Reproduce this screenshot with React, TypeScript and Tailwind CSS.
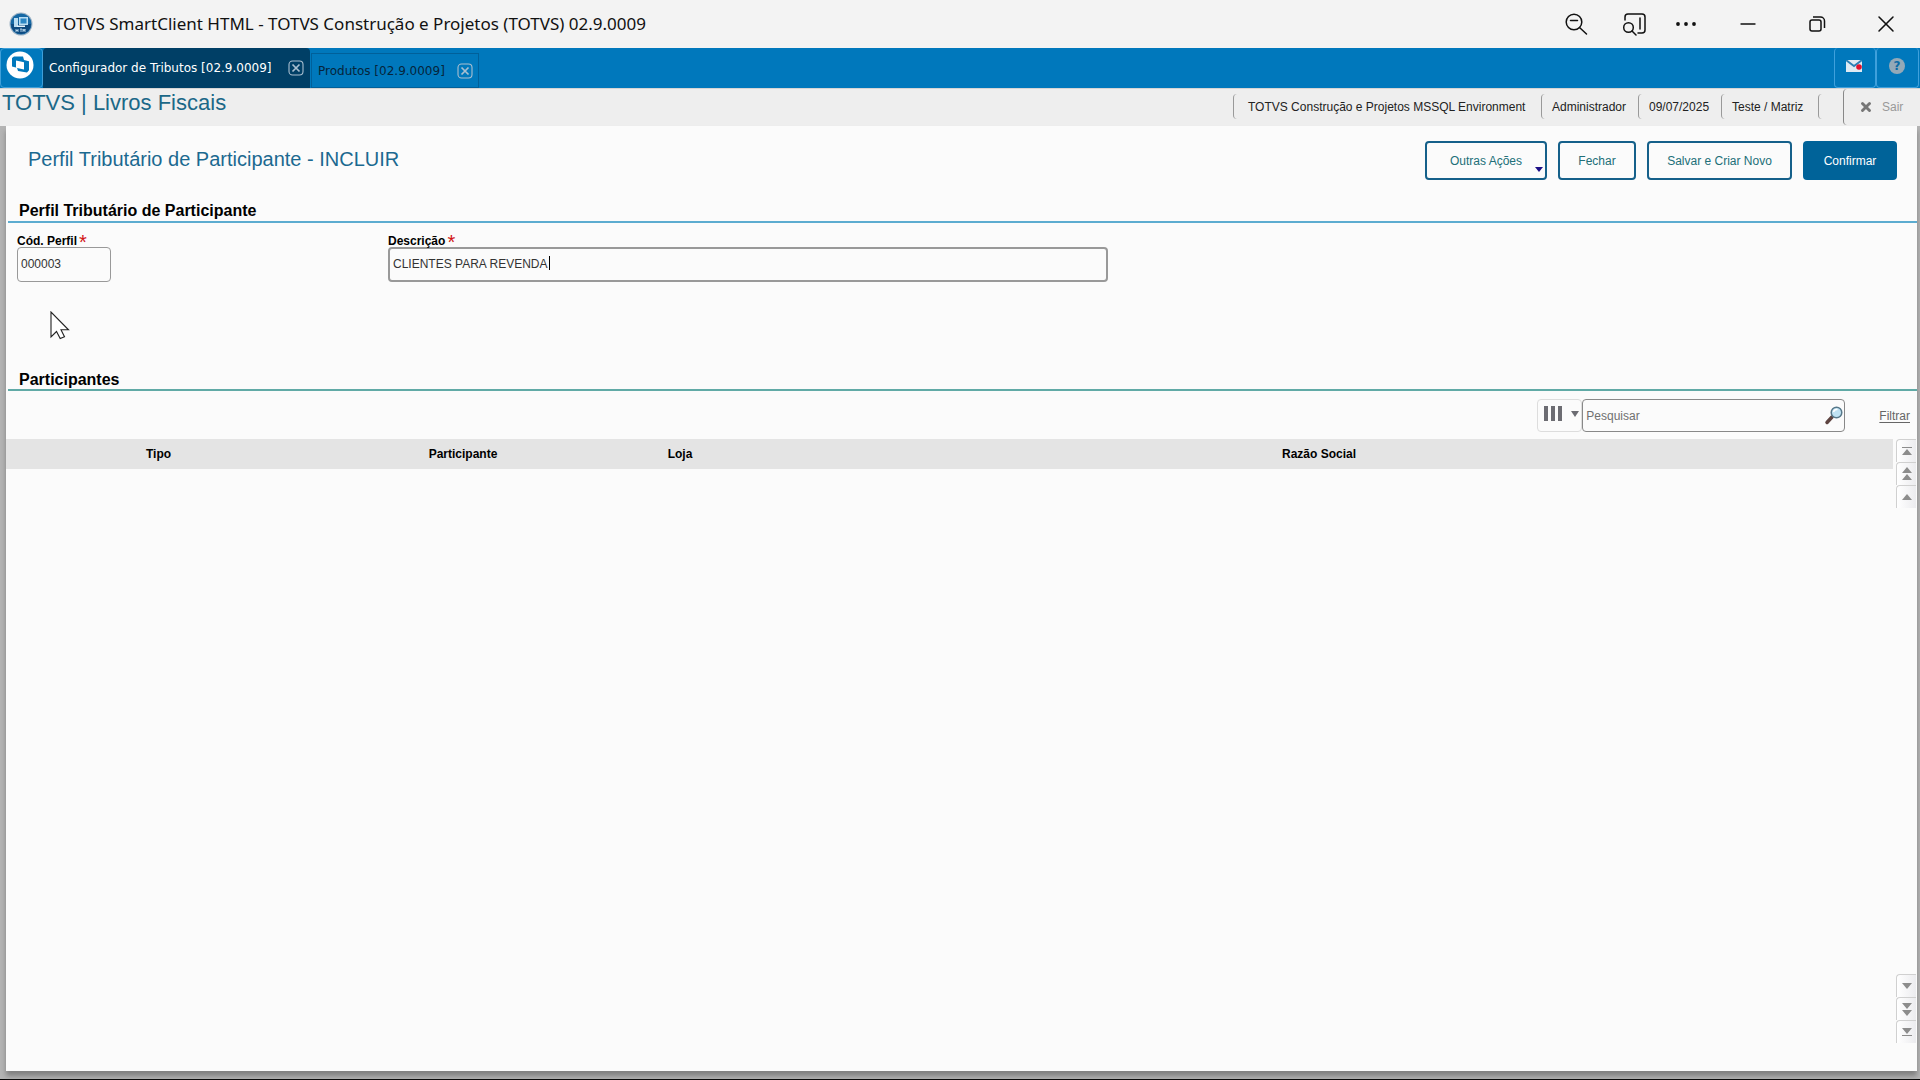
import React from 'react';
import { Minus, X } from 'lucide-react';

const ENVIRONMENT = ['TOTVS Construção e Projetos MSSQL Environment', 'Administrador', '09/07/2025', 'Teste / Matriz'];

const BUTTON = 'relative h-[39px] rounded border-2 border-[#15608a] text-[12px] text-[#216f78]';

function AppIcon() {
  return (
    <svg className="h-6 w-6" viewBox="0 0 24 24">
      <circle cx="12" cy="12" r="11.5" fill="#9fb4c6" />
      <circle cx="12" cy="12" r="10.5" fill="#1668a4" />
      <path d="M2 12a10 10 0 0 0 20 0z" fill="#0d4a80" />
      <path d="M5 6h4v9H5zM10 5h9v8h-9z" fill="#b8dcf2" />
      <path d="M11.500 6.500h6v5h-6z" fill="#2b86c4" />
      <path d="M8 13.500h8v1.500H8z" fill="#e6f4fc" />
      <path d="M7 17v3M7 18.500h2M9 17v3M11 17h2M12 17v3M14 20v-3l1 2 1-2v3" fill="none" stroke="#cfe8f7" strokeWidth="0.8" />
    </svg>
  );
}

function TotvsLogo() {
  return (
    <svg className="h-7 w-7" viewBox="0 0 28 28">
      <circle cx="14" cy="14" r="13.5" fill="#fff" />
      <path d="M6 7l2-1.500h9l1 3.500 5 1.300v9l-2 2.200-9-1.500-1-3.300-5-1.200z" fill="#0078bc" />
      <path d="M10 9.500l8 1.800v7.200l-8-1.800z" fill="#fff" />
    </svg>
  );
}

function TabClose({ label }: { label: string }) {
  return (
    <button aria-label={label} className="text-[#a9bfd0]">
      <svg className="h-4 w-4" viewBox="0 0 16 16" fill="none" stroke="currentColor">
        <rect x="1" y="1" width="14" height="14" rx="3.5" strokeWidth="1.1" />
        <path d="M4.500 4.500l7 7M11.500 4.500l-7 7" strokeWidth="1.7" />
      </svg>
    </button>
  );
}

function TitleBar() {
  return (
    <header className="flex h-12 items-center bg-[#f3f3f3] pl-[9px] text-[#111]">
      <AppIcon />
      <h1 className="ml-[21px] flex-1 font-['Noto_Sans',sans-serif] text-[17px]">
        TOTVS SmartClient HTML - TOTVS Construção e Projetos (TOTVS) 02.9.0009
      </h1>
      <div className="flex items-center">
        <button aria-label="Reduzir zoom" className="w-[58px]">
          <svg className="mx-auto h-6 w-6" viewBox="0 0 24 24" fill="none" stroke="currentColor" strokeWidth="1.5">
            <circle cx="10" cy="10" r="7.8" />
            <path d="M6.500 8.500h7M15.500 15.500l7 6.500" strokeLinecap="round" />
          </svg>
        </button>
        <button aria-label="Pesquisar na página" className="w-[58px]">
          <svg className="mx-auto h-6 w-6" viewBox="0 0 24 24" fill="none" stroke="currentColor" strokeWidth="1.5" strokeLinecap="round">
            <path d="M3 8V5a3 3 0 0 1 3-3h14a3 3 0 0 1 3 3v13a3 3 0 0 1-3 3h-4" />
            <path d="M18 6v11" />
            <circle cx="6.500" cy="15.500" r="4.800" />
            <path d="M10 19l4 4" />
          </svg>
        </button>
        <button aria-label="Mais opções" className="w-[46px]">
          <svg className="mx-auto h-6 w-6" viewBox="0 0 24 24" fill="currentColor">
            <circle cx="4" cy="12" r="1.900" />
            <circle cx="12" cy="12" r="1.900" />
            <circle cx="20" cy="12" r="1.900" />
          </svg>
        </button>
        <button aria-label="Minimizar" className="ml-1 w-[69px]">
          <Minus className="mx-auto h-6 w-6" strokeWidth={1.4} />
        </button>
        <button aria-label="Restaurar" className="w-[69px]">
          <svg className="mx-auto h-5 w-5" viewBox="0 0 20 20" fill="none" stroke="currentColor" strokeWidth="1.5">
            <rect x="3" y="6" width="11" height="11" rx="2" />
            <path d="M6 3h7.500a4 4 0 0 1 4 4v7" />
          </svg>
        </button>
        <button aria-label="Fechar janela" className="w-[69px]">
          <X className="mx-auto h-7 w-7" strokeWidth={1.3} />
        </button>
      </div>
    </header>
  );
}

function TabBar() {
  return (
    <nav className="flex h-10 items-stretch bg-[#0078bc] pr-px font-['DejaVu_Sans',sans-serif] text-[12px]">
      <button aria-label="Menu" className="flex w-[43px] rounded-sm border border-[#3f9fd8] pt-[2px] pl-[5px]">
        <TotvsLogo />
      </button>
      <div className="flex w-[267px] items-center justify-between rounded-t bg-[#003f66] pr-[6px] pl-[6px] text-white">
        <button>Configurador de Tributos [02.9.0009]</button>
        <TabClose label="Fechar Configurador de Tributos" />
      </div>
      <div className="mt-[5px] ml-px flex w-[168px] items-center justify-between border border-[#00609a] pr-[5px] pl-[6px] text-[#06253b]">
        <button>Produtos [02.9.0009]</button>
        <TabClose label="Fechar Produtos" />
      </div>
      <div className="ml-auto flex">
        <button aria-label="Mensagens" className="flex w-[42px] rounded border border-t-0 border-[#3fa0dc] pt-3 pl-[11px]">
          <svg className="h-3 w-4" viewBox="0 0 16 12">
            <rect width="16" height="12" fill="#dfeaf3" />
            <path d="M0 0l8 6 8-6" fill="none" stroke="#2c7fb5" strokeWidth="1.8" />
            <circle cx="13" cy="7" r="2.8" fill="#e3122d" />
          </svg>
        </button>
        <button aria-label="Ajuda" className="flex w-[43px] rounded border border-t-0 border-[#3fa0dc] pt-[10px] pl-3">
          <span className="h-4 w-4 rounded-full bg-[#93a9b8] text-center text-[12px] leading-4 font-bold text-[#0b6ba6]">?</span>
        </button>
      </div>
    </nav>
  );
}

function StatusBar() {
  return (
    <div className="flex h-[38px] items-start border-t border-[#d5d5d5] bg-[#eee] text-[12px] text-[#222]">
      <h2 className="flex-1 pt-[2px] pl-[2px] text-[22px] leading-6 text-[#1b6888]">TOTVS | Livros Fiscais</h2>
      <ul className="flex items-center pt-[5px]">
        {ENVIRONMENT.map((item, i) => (
          <li
            key={item}
            className={`flex h-[25px] items-center rounded border-l border-[#999] ${
              i === 0 ? 'w-[308px] pl-[14px]' : i === 2 ? 'w-[83px] pl-[10px]' : 'w-[97px] pl-[10px]'
            }`}
          >
            {item}
          </li>
        ))}
        <li className="h-[25px] w-[25px] rounded border-l border-[#999]" />
      </ul>
      <button className="flex h-9 w-[77px] items-center gap-[9px] rounded border-l border-[#888] pl-[15px] text-[#999]">
        <X className="h-[14px] w-[14px] text-[#777]" strokeWidth={5} />
        Sair
      </button>
    </div>
  );
}

function Required() {
  return <span className="ml-[2px] text-[20px] leading-4 font-normal text-[#d21414]">*</span>;
}

const ARROWS: Record<string, string> = {
  first: 'M2 3h10v1H2zM7 5l5 6H2z',
  pageUp: 'M7 0l5 6H2zM7 7l5 6H2z',
  up: 'M7 4l5 6H2z',
  down: 'M7 10l5-6H2z',
  pageDown: 'M7 7l5-6H2zM7 14l5-6H2z',
  last: 'M7 9l5-6H2zM2 10h10v1H2z',
};

function ScrollButtons({ items }: { items: [string, string][] }) {
  return (
    <div className="flex flex-col">
      {items.map(([icon, label]) => (
        <button
          key={icon}
          aria-label={label}
          className="flex h-[23px] w-5 items-center justify-center rounded-tl-sm border-t border-l border-[#d0d0d0] bg-gradient-to-r from-white to-[#ececef] pl-px"
        >
          <svg className="h-[14px] w-[14px]" viewBox="0 0 14 14" fill="#8c8c8c">
            <path d={ARROWS[icon]} />
          </svg>
        </button>
      ))}
    </div>
  );
}

function Pointer() {
  return (
    <svg className="pointer-events-none absolute top-[185px] left-[44px] h-[29px] w-5" viewBox="0 0 20 29">
      <path d="M1 1v25l5.500-5.500 3.700 7 4.300-1.700-3.500-7h7.500z" fill="#fff" stroke="#222" strokeWidth="1.1" />
    </svg>
  );
}

export default function App() {
  return (
    <div className="flex min-h-screen flex-col border-b border-black bg-[#b4b4b4] font-['Liberation_Sans',Arial,sans-serif]">
      <TitleBar />
      <TabBar />
      <StatusBar />

      <main className="relative mr-[3px] mb-2 ml-[6px] flex flex-1 flex-col bg-[#fbfbfb] shadow-[0_5px_5px_#808080]">
        <Pointer />

        <div className="flex h-[71px] items-start pt-[15px] pr-5 pl-[22px]">
          <h2 className="flex-1 pt-[6px] text-[20px] leading-6 text-[#1b6990]">Perfil Tributário de Participante - INCLUIR</h2>
          <div className="flex gap-[11px]">
            <button className={`${BUTTON} w-[122px]`}>
              Outras Ações
              <svg className="absolute right-[2px] bottom-[6px] h-[5px] w-2" viewBox="0 0 8 5" fill="#1c0f86">
                <path d="M0 0h8L4 5z" />
              </svg>
            </button>
            <button className={`${BUTTON} w-[78px]`}>Fechar</button>
            <button className={`${BUTTON} w-[145px]`}>Salvar e Criar Novo</button>
            <button className="h-[39px] w-[94px] rounded bg-[#006399] text-[12px] text-white">Confirmar</button>
          </div>
        </div>

        <section className="ml-[2px] h-[169px]">
          <h3 className="h-[26px] border-b-2 border-[#5cacd0] pt-1 pl-[11px] text-[16px] leading-5 font-bold">
            Perfil Tributário de Participante
          </h3>
          <div className="flex pt-[11px] pl-[9px] text-[12px] text-[#333]">
            <div className="w-[371px]">
              <label htmlFor="codigo" className="flex h-[13px] leading-[14px] font-bold text-black">
                Cód. Perfil
                <Required />
              </label>
              <input id="codigo" defaultValue="000003" className="block h-[35px] w-[94px] rounded border border-[#999] px-[3px] pb-px" />
            </div>
            <div className="relative">
              <label htmlFor="descricao" className="flex h-[13px] leading-[14px] font-bold text-black">
                Descrição
                <Required />
              </label>
              <input
                id="descricao"
                defaultValue="CLIENTES PARA REVENDA"
                className="block h-[35px] w-[720px] rounded border-2 border-[#999] px-[3px] pb-px"
              />
              <span className="absolute top-[22px] left-[161px] h-[14px] w-px bg-black" />
            </div>
          </div>
        </section>

        <section className="flex flex-1 flex-col">
          <h3 className="ml-[2px] h-[25px] border-b-2 border-[#60aaa6] pt-1 pl-[11px] text-[16px] leading-5 font-bold">
            Participantes
          </h3>

          <div className="flex h-12 items-start justify-end pt-2 pr-[7px] text-[12px] text-[#666]">
            <button aria-label="Colunas" className="flex h-[33px] w-[45px] items-center gap-[9px] rounded border border-[#ddd] pb-1 pl-[6px]">
              <svg className="h-[15px] w-[18px]" viewBox="0 0 18 15" fill="#6c6c72">
                <path d="M0 0h4v15H0zM7 0h4v15H7zM14 0h4v15h-4z" />
              </svg>
              <svg className="h-[6px] w-2" viewBox="0 0 8 6" fill="#6c6c72">
                <path d="M0 0h8L4 6z" />
              </svg>
            </button>
            <div className="relative">
              <input
                type="text"
                aria-label="Pesquisar"
                placeholder="Pesquisar"
                className="block h-[33px] w-[263px] rounded border border-[#888] px-[3px] placeholder:text-[#707070]"
              />
              <svg className="absolute top-[7px] right-[2px] h-[19px] w-[19px]" viewBox="0 0 19 19">
                <path d="M3 16.500l5-5.500" stroke="#5d4340" strokeWidth="3.500" strokeLinecap="round" />
                <circle cx="12.500" cy="6.500" r="5.300" fill="#bfe2f3" stroke="#57788a" strokeWidth="1.500" />
                <path d="M9.500 6a3.500 3.500 0 0 1 4-2.500" fill="none" stroke="#fff" strokeWidth="1.500" />
              </svg>
            </div>
            <a href="#filtrar" className="mt-[9px] ml-[34px] leading-4 underline underline-offset-2">
              Filtrar
            </a>
          </div>

          <div className="flex flex-1 pr-px pb-[28px]">
            <div className="flex-1">
              <table className="w-full table-fixed text-[12px]">
                <thead>
                  <tr className="h-[30px] bg-[#e4e4e4]">
                    <th className="w-[305px]">Tipo</th>
                    <th className="w-[304px]">Participante</th>
                    <th className="w-[130px]">Loja</th>
                    <th>Razão Social</th>
                  </tr>
                </thead>
                <tbody />
              </table>
            </div>
            <div className="ml-[3px] flex flex-col justify-between">
              <ScrollButtons items={[['first', 'Primeira linha'], ['pageUp', 'Página anterior'], ['up', 'Linha anterior']]} />
              <ScrollButtons items={[['down', 'Próxima linha'], ['pageDown', 'Próxima página'], ['last', 'Última linha']]} />
            </div>
          </div>
        </section>
      </main>
    </div>
  );
}
